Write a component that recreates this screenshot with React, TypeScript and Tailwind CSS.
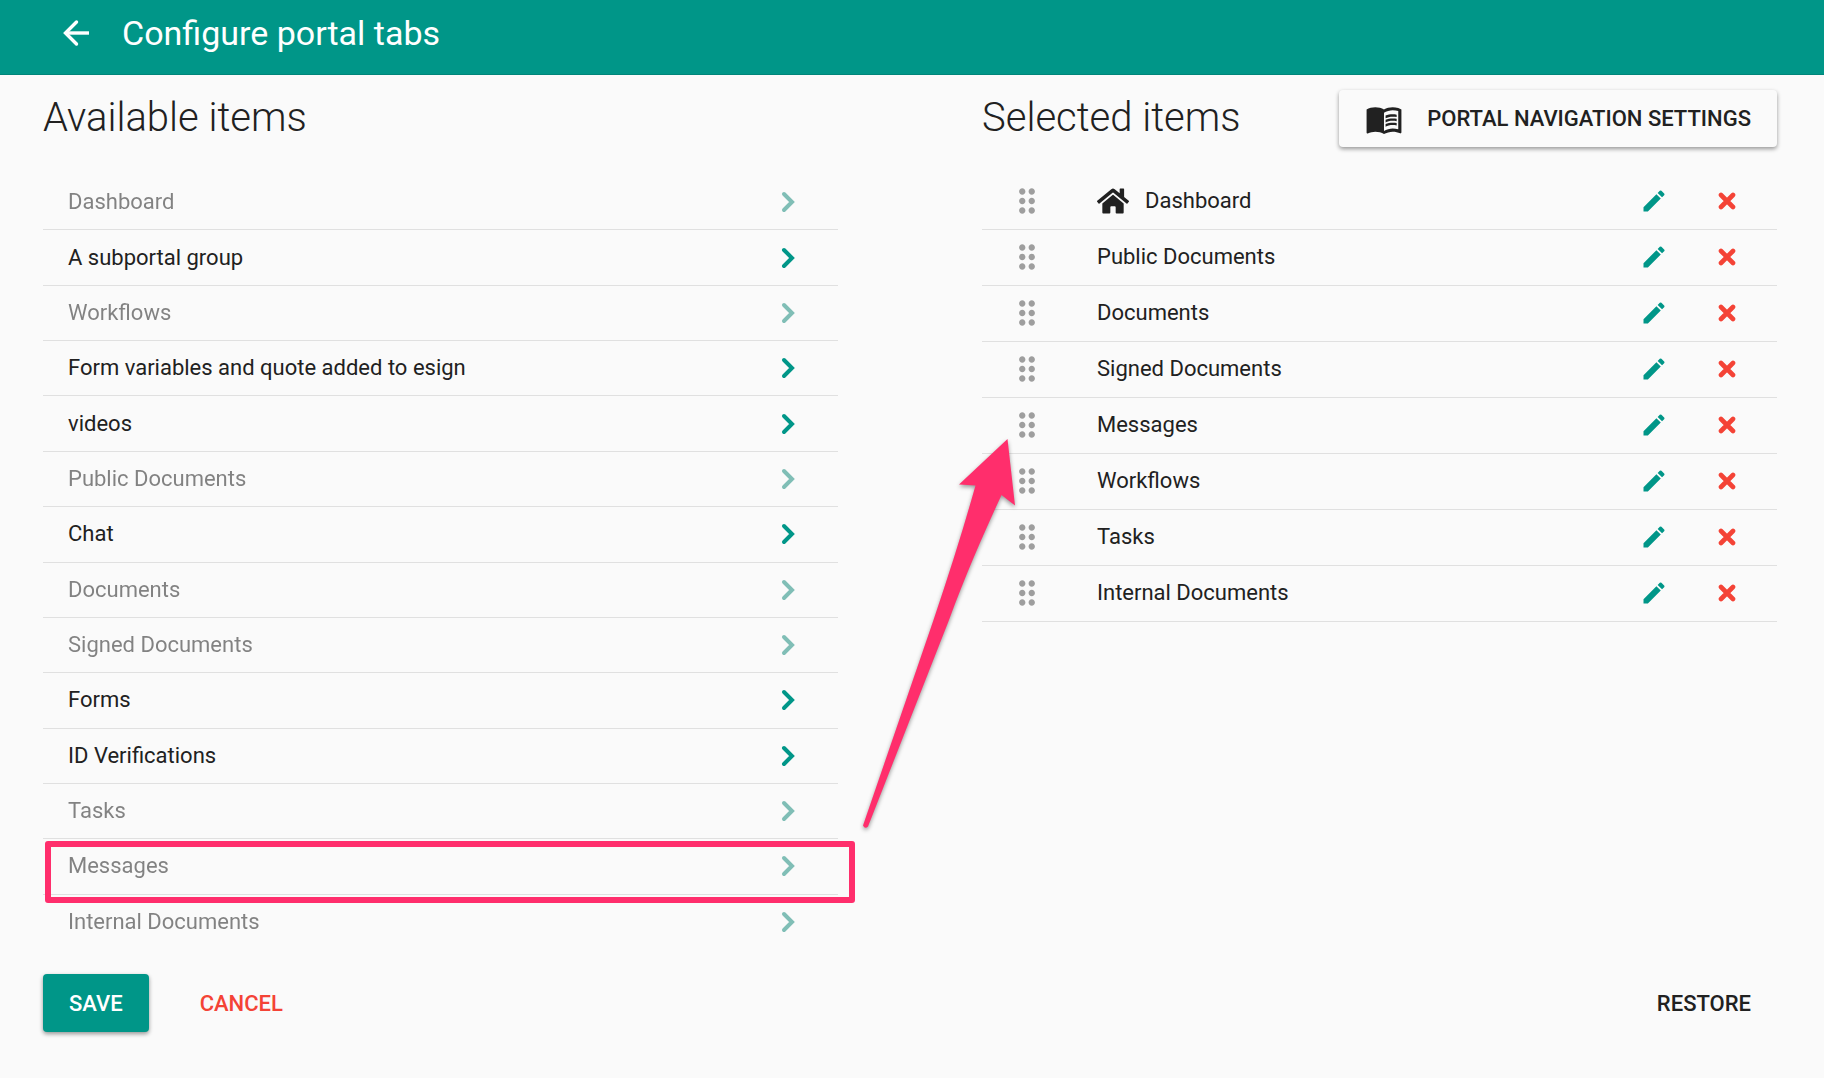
import React from 'react';
import { MdDragIndicator, MdEdit, MdMenuBook } from 'react-icons/md';
import { FaHome } from 'react-icons/fa';

interface AvailableItem {
  label: string;
  used?: boolean;
  highlighted?: boolean;
}

const availableItems: AvailableItem[] = [
  { label: 'Dashboard', used: true },
  { label: 'A subportal group' },
  { label: 'Workflows', used: true },
  { label: 'Form variables and quote added to esign' },
  { label: 'videos' },
  { label: 'Public Documents', used: true },
  { label: 'Chat' },
  { label: 'Documents', used: true },
  { label: 'Signed Documents', used: true },
  { label: 'Forms' },
  { label: 'ID Verifications' },
  { label: 'Tasks', used: true },
  { label: 'Messages', used: true, highlighted: true },
  { label: 'Internal Documents', used: true },
];

const selectedItems = [
  'Dashboard',
  'Public Documents',
  'Documents',
  'Signed Documents',
  'Messages',
  'Workflows',
  'Tasks',
  'Internal Documents',
];

const BackIcon: React.FC = () => (
  <svg width="38" height="38" viewBox="0 0 38 38" fill="none" stroke="currentColor" strokeWidth="3.4">
    <path d="M32 19H9" />
    <path d="M19.500 8L8.500 19l11 11" strokeLinecap="round" />
  </svg>
);

const ChevronIcon: React.FC = () => (
  <svg width="14" height="22" viewBox="0 0 14 22" fill="none" stroke="currentColor" strokeWidth="4" strokeLinecap="round">
    <path d="M3 3l8 8-8 8" />
  </svg>
);

const CrossIcon: React.FC = () => (
  <svg width="18" height="18" viewBox="0 0 18 18" fill="none" stroke="currentColor" strokeWidth="4.6" strokeLinecap="round">
    <path d="M3 3l12 12M15 3L3 15" />
  </svg>
);

const Arrow: React.FC = () => (
  <svg
    className="absolute left-[855px] top-[360px] pointer-events-none drop-shadow-[0_2px_2px_rgba(0,0,0,0.4)]"
    width="170"
    height="400"
    viewBox="855 435 170 400"
    fill="#ff2e6c"
    aria-hidden="true"
  >
    <path d="M1007.5 439L1015 505.500L1001.500 495C983 535 966 574 949 620L868 826.500Q865 829.500 863 825.500L933.500 620C949 574 963 530 975.500 485.500L959 484.500Z" />
  </svg>
);

const AvailableList: React.FC = () => (
  <ul className="grid auto-rows-fr min-h-[775px]">
    {availableItems.map((item) => (
      <li key={item.label} className="relative flex items-center justify-between pl-[25px] pr-[43px] border-b border-[#e0e0e0] last:border-b-0">
        <span className={item.used ? 'opacity-55' : ''}>{item.label}</span>
        <button
          type="button"
          disabled={item.used}
          aria-label={`Add ${item.label}`}
          className="text-[#009688] disabled:text-[#80beb6]"
        >
          <ChevronIcon />
        </button>
        {item.highlighted && (
          <span className="absolute left-[2px] -right-[17px] top-[2px] -bottom-[9px] border-6 border-[#ff2e6c] rounded-[3px]" />
        )}
      </li>
    ))}
  </ul>
);

const SelectedList: React.FC = () => (
  <ul>
    {selectedItems.map((label) => (
      <li key={label} className="flex items-center h-14 pl-[26px] pr-[41px] pb-px border-b border-[#e0e0e0]">
        <MdDragIndicator size={38} className="text-[#9e9e9e] mr-[51px]" />
        {label === 'Dashboard' && <FaHome size={32} className="mr-4" />}
        <span className="flex-1">{label}</span>
        <button type="button" aria-label={`Edit ${label}`} className="text-[#009688] mr-[50px]">
          <MdEdit size={28} />
        </button>
        <button type="button" aria-label={`Remove ${label}`} className="text-[#f44336]">
          <CrossIcon />
        </button>
      </li>
    ))}
  </ul>
);

export default function App() {
  return (
    <div className="min-h-screen flex flex-col bg-[#fafafa] text-[#212121] font-[Roboto,sans-serif] text-[22px] leading-7">
      <header className="flex items-center gap-[27px] h-[75px] pl-[57px] pb-2 bg-[#009688] border-b border-[#00857a] text-white">
        <button type="button" aria-label="Back">
          <BackIcon />
        </button>
        <h1 className="text-[34px] leading-10">Configure portal tabs</h1>
      </header>

      <main className="relative pl-[43px] pr-[47px]">
        <div className="grid grid-cols-2 gap-36">
          <section>
            <div className="flex items-center h-[86px] mb-[14px]">
              <h2 className="text-[40px] leading-12 font-light">Available items</h2>
            </div>
            <AvailableList />
          </section>

          <section>
            <div className="flex items-center justify-between h-[86px] mb-[13px]">
              <h2 className="text-[40px] leading-12 font-light">Selected items</h2>
              <button
                type="button"
                className="flex items-center gap-6 h-[57px] pl-[26px] pr-[26px] pt-0.5 rounded font-medium shadow-[0_2px_4px_rgba(0,0,0,0.4)]"
              >
                <MdMenuBook size={38} />
                PORTAL NAVIGATION SETTINGS
              </button>
            </div>
            <SelectedList />
          </section>
        </div>

        <div className="flex items-center mt-6 font-medium">
          <button type="button" className="h-[58px] px-[26px] pt-0.5 rounded bg-[#009688] text-white shadow-[0_2px_4px_rgba(0,0,0,0.4)]">
            SAVE
          </button>
          <button type="button" className="h-[58px] px-[26px] pt-0.5 ml-[25px] text-[#f44336]">
            CANCEL
          </button>
          <button type="button" className="h-[58px] px-[26px] pt-0.5 ml-auto">
            RESTORE
          </button>
        </div>

        <Arrow />
      </main>
    </div>
  );
}
